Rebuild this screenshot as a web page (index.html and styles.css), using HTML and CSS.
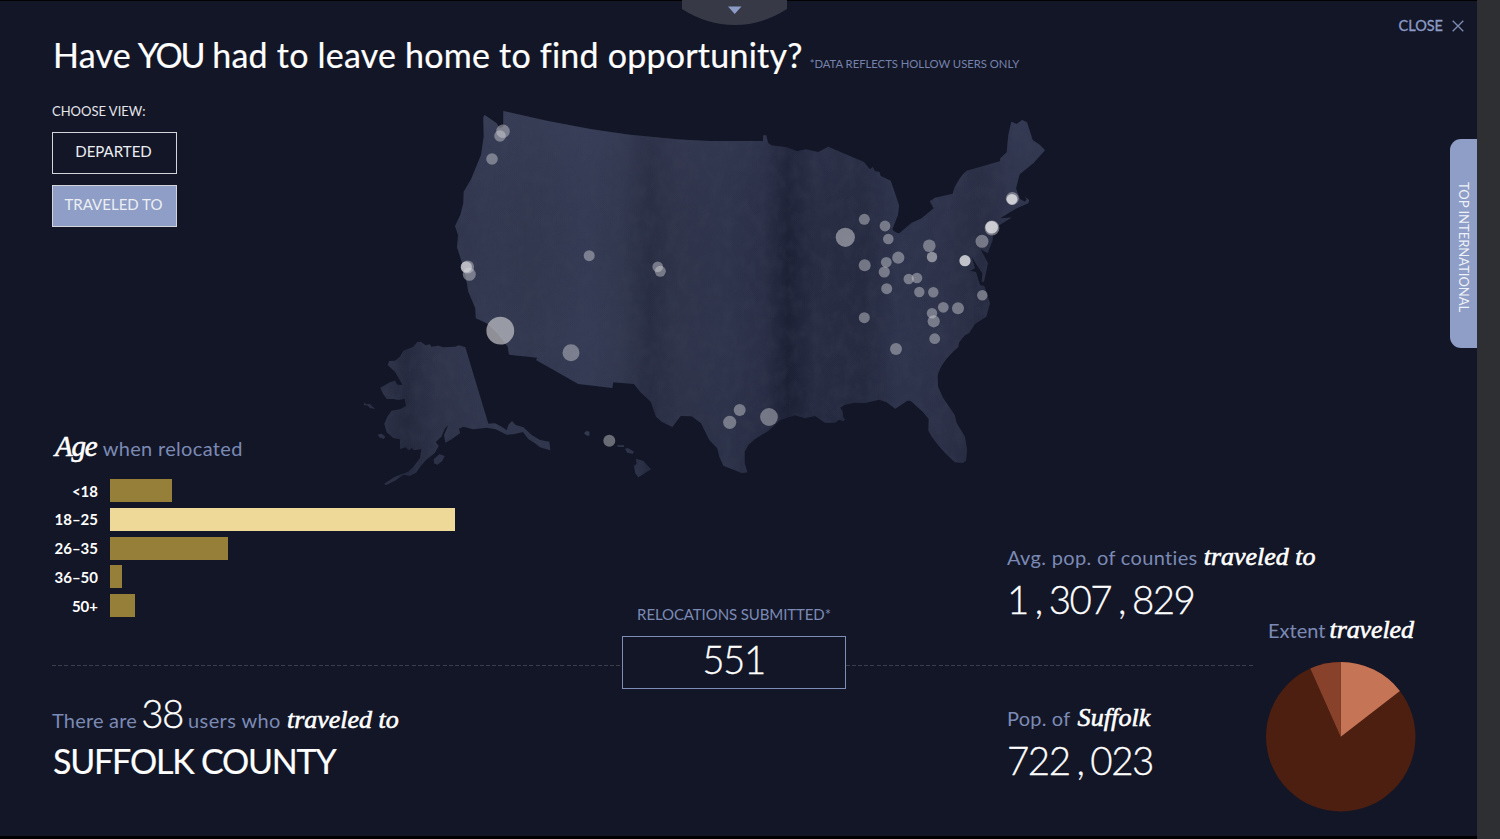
FILE: index.html
```html
<!DOCTYPE html>
<html lang="en">
<head>
<meta charset="utf-8">
<title>Have YOU had to leave home to find opportunity?</title>
<link rel="stylesheet" href="styles.css">
</head>
<body>
<div class="panel">
  <svg class="notch" viewBox="0 0 105 26" width="105" height="26">
    <path d="M0 0H105V9Q80 25 52.500 25Q25 25 0 9Z" fill="#373946"/>
    <path d="M46 6.500H59.500L52.700 14Z" fill="#8c9cc6"/>
  </svg>

  <header class="header">
    <h1 class="title">Have <span class="you">YOU</span> had to leave home to find opportunity?</h1>
    <span class="title-note">*DATA REFLECTS HOLLOW USERS ONLY</span>
    <button class="close">CLOSE
      <svg viewBox="0 0 12 12" width="12" height="12"><path d="M.7.700 11.300 11.300M11.300.700.700 11.300" stroke="#7f8db4" stroke-width="1.300"/></svg>
    </button>
  </header>

  <main class="main">
    <svg class="map" viewBox="360 100 690 395" width="690" height="395">
      <defs>
        <linearGradient id="folds" gradientUnits="userSpaceOnUse" x1="360" x2="1050" y1="0" y2="0">
          <stop offset="0" stop-color="#2d3248"/>
          <stop offset=".04" stop-color="#2d3248"/>
          <stop offset=".067" stop-color="#262b40"/>
          <stop offset=".11" stop-color="#30354c"/>
          <stop offset=".18" stop-color="#343a52"/>
          <stop offset=".25" stop-color="#333950"/>
          <stop offset=".33" stop-color="#363c56"/>
          <stop offset=".38" stop-color="#333950"/>
          <stop offset=".42" stop-color="#292e44"/>
          <stop offset=".46" stop-color="#30354c"/>
          <stop offset=".53" stop-color="#2f354d"/>
          <stop offset=".585" stop-color="#2b3048"/>
          <stop offset=".62" stop-color="#1d2136"/>
          <stop offset=".66" stop-color="#282d44"/>
          <stop offset=".73" stop-color="#262b41"/>
          <stop offset=".78" stop-color="#2f354e"/>
          <stop offset=".85" stop-color="#2e334b"/>
          <stop offset=".9" stop-color="#282d43"/>
          <stop offset=".95" stop-color="#30354e"/>
          <stop offset="1" stop-color="#30364e"/>
        </linearGradient>
        <linearGradient id="sheen" x1="0" x2="0" y1="0" y2="1">
          <stop offset="0" stop-color="#4a5070" stop-opacity=".2"/>
          <stop offset=".6" stop-color="#131626" stop-opacity="0"/>
          <stop offset="1" stop-color="#131626" stop-opacity=".15"/>
        </linearGradient>
        <filter id="grain" x="0" y="0" width="100%" height="100%">
          <feTurbulence type="fractalNoise" baseFrequency=".09 .07" numOctaves="3" seed="4"/>
          <feColorMatrix values="0 0 0 0 .05  0 0 0 0 .06  0 0 0 0 .1  1.200 0 0 0 -.42"/>
        </filter>
        <clipPath id="land">
          <path d="M503.300 111 546.700 120.700 591.700 129.300 630 134.700 680 139.500 710 141H763L763.300 135.300H766.300L768 142.700 771.300 145.300 786.700 147.300 797.300 151.300 805.700 149.300 818.300 152 828.300 146.700 864 162 870 169.300 872.700 167 875 171 879.300 172 880.700 176 890.700 180.700 895 193.300 899 205.300 898 215 892.300 229.300 Q895 233 899.300 233.300L911.700 222.700 921.700 218.300 933.700 208.300 929.700 201.300 935 197.700 952.700 193.700 954.300 188Q960 176 966.700 170.700L1000 161.300 1000.300 158.300 1006.700 152.300 1008.300 135 1011.300 121.700 1016.700 124 1022 120 1027 122.300 1032.700 140 1040 145 1045 150.300 1033.300 163.300 1019.700 174.300 1016 188.300 1020 199 1025 201.700 1026.700 199.300 1025 196.700 1029.300 200 1028.300 203.300 1016.700 208.300 1000 218.300 1011.700 217.500 998.300 225.700 993 228 992.700 240 987.700 253.300 980.700 249.300 988 263.300 984 281.700H981.700L982.300 273.300 976.700 265 971.700 256.700 975 268.300 970 270.700 976 272 980 285 984.300 286 990 303.300 986.300 316.700 975 324 969 333.300 964.300 335.700 959 342.700 958.300 347Q940 363 937.700 376L938 386.700 943.300 398.300 954.700 415 956.700 423.300 965 436.700 967 450 966 460.700 962.700 463 955 462.300 946 454Q933 440 928.300 430.700L928.700 419 922.700 411.700 910.700 401 907.300 400.700 895.300 408.700 886.700 402.300 879 399.700 865 403 855 402.700 845 404.700 840.300 407.700 842.700 411.700 843 416.700 845 419.300 843.300 421.300 839.300 419.700 835 422.700H825L815 416 805 418.300 795 415.300 780 420 768.300 431 755 439 748.300 445 744.700 451.700V463.300L747.300 472.300 741.700 473 723.300 465.700 719.300 456.700 717.300 448.300 709.300 440 701 423.300 691.700 416.300 680.700 416 672.300 427 661.700 421.700 656 416.700 650.700 401.700 640 391.700 634 384 613.300 382.300 612.300 388 578.300 384 536 360 537.300 357.700 509 354.700 507.700 346.700 497 333 486.700 323.300 475.700 318.300 475.300 308.300 468.300 291.700 466 278.300 461.700 261.700 457 247.300 458 235 455 226 460.300 215 463.300 203.300 463.700 191.700 471 179.300 481 155 483.700 136.700 483.300 117.300 484.700 115 496.700 123.300 499.300 128 503.300 126.700Z"/>
          <path transform="translate(340 320) scale(.33333)" d="M376 82 445 311 465 310 485 320 500 331 505 315 516 303 527 315 550 322 575 345 600 360 628 365 631 391 600 382 585 370 565 357 549 336 520 343 500 344 468 328 440 323 400 328 370 320 357 326 360 340 335 358 316 368 312 345 325 315 315 325 304 350 287 366 296 378 285 398 258 420 240 441 228 458 210 467 190 464 165 482 138 495 133 491 165 470 205 455 222 438 240 415 244 387 222 391 215 383 208 391 196 382 180 387 180 358 160 354 140 337 133 312 142 290 155 272 180 268 198 258 194 236 178 240 160 237 140 237 128 220 121 203 150 187 165 182 172 194 188 195 165 155 143 135 148 123 165 122 180 110 190 92 220 80 232 66 242 65 257 76 270 73 274 80 295 77 310 82 345 80 357 76Z"/>
          <path transform="translate(340 320) scale(.33333)" d="M72 247 78 253 90 252 105 267 90 264 82 256 72 256ZM113 344 125 341 136 350 131 357 118 352ZM281 418 298 403 314 408 306 424 292 434 282 430ZM732 339 740 333 748 335 748 347 738 346ZM831 376 852 376 852 381 833 380ZM855 386 865 385 882 395 878 401 862 398ZM888 416 910 423 933 448 895 472 886 460 882 437 890 432Z"/>
        </clipPath>
      </defs>
      <g clip-path="url(#land)">
        <rect x="360" y="100" width="690" height="395" fill="url(#folds)"/>
        <rect x="360" y="100" width="690" height="395" fill="url(#sheen)"/>
        <rect x="360" y="100" width="690" height="395" filter="url(#grain)" opacity=".4"/>
      </g>
      <g fill="#d2d2d6" fill-opacity=".45">
        <circle cx="503" cy="131.300" r="6.800"/><circle cx="500" cy="136" r="5.800"/><circle cx="492" cy="159" r="5.800"/>
        <circle cx="467.500" cy="267" r="6.600"/><circle cx="469.300" cy="274.300" r="6.500"/>
        <circle cx="589.200" cy="255.700" r="5.500"/><circle cx="657.700" cy="266.700" r="5.300"/><circle cx="660.300" cy="271.300" r="5.500"/>
        <circle cx="571" cy="352.700" r="8.500"/><circle cx="845.300" cy="237.300" r="9.600" fill-opacity=".53"/>
        <circle cx="864.300" cy="219.300" r="5.500"/><circle cx="864.700" cy="265.300" r="6"/><circle cx="864.300" cy="317.700" r="5.500"/>
        <circle cx="739.700" cy="410" r="6"/><circle cx="729.700" cy="422.300" r="6.600"/><circle cx="769" cy="417" r="8.900"/>
        <circle cx="885" cy="226" r="5.400"/><circle cx="888.300" cy="239" r="5.300"/><circle cx="898.300" cy="257.700" r="6.100"/>
        <circle cx="886.300" cy="262.300" r="5.400"/><circle cx="884.300" cy="272" r="5.600"/><circle cx="886.700" cy="288.700" r="5.500"/>
        <circle cx="908.700" cy="279" r="5.200"/><circle cx="917" cy="278" r="5.300"/><circle cx="919.300" cy="292" r="5.200"/>
        <circle cx="933.300" cy="292.300" r="5.200"/><circle cx="929.300" cy="245.700" r="6.300"/><circle cx="932" cy="257" r="5.200" fill-opacity=".58"/>
        <circle cx="943.300" cy="307.300" r="5.400"/><circle cx="958" cy="308.300" r="6"/><circle cx="932" cy="313.300" r="5.200"/>
        <circle cx="933.700" cy="321.300" r="6.100"/><circle cx="934.700" cy="338.700" r="5.400"/><circle cx="896" cy="349" r="6"/>
        <circle cx="982" cy="241.300" r="6.500"/><circle cx="982.300" cy="295.300" r="5.200"/><circle cx="609.300" cy="440.700" r="6"/>
        <circle cx="992" cy="228" r="7.400"/><circle cx="1012.300" cy="198.500" r="6.500"/>
      </g>
      <circle cx="500.300" cy="330.700" r="13.900" fill="#c9c9cd" fill-opacity=".68"/>
      <g fill="#dcdce0" fill-opacity=".85">
        <circle cx="466.300" cy="267" r="5.600" fill-opacity=".65"/><circle cx="965" cy="260.700" r="5.600"/>
        <circle cx="991.700" cy="227.300" r="6.300"/><circle cx="1012" cy="199.300" r="5.400"/>
      </g>
    </svg>

    <aside class="side-tab">TOP INTERNATIONAL</aside>
    <div class="divider"></div>

    <section class="left">
      <p class="choose">CHOOSE VIEW:</p>
      <button class="view">DEPARTED</button>
      <button class="view view-active">TRAVELED TO</button>

      <h2 class="label age-title"><em class="script script-age">Age</em> <span class="age-rest">when relocated</span></h2>
      <div class="bars">
        <span class="range">&lt;18</span><i class="bar" style="width:62.500px"></i>
        <span class="range">18–25</span><i class="bar bar-active" style="width:345px"></i>
        <span class="range">26–35</span><i class="bar" style="width:118px"></i>
        <span class="range">36–50</span><i class="bar" style="width:12.500px"></i>
        <span class="range">50+</span><i class="bar" style="width:25.500px"></i>
      </div>

      <p class="label users"><span class="there">There are</span> <b class="number count">38</b> <span class="who">users who</span> <em class="script">traveled to</em></p>
      <p class="county">SUFFOLK COUNTY</p>
    </section>

    <section class="center">
      <p class="submitted">RELOCATIONS SUBMITTED*</p>
      <div class="total number">551</div>
    </section>

    <section class="right">
      <p class="label"><span class="avg">Avg. pop. of counties</span> <em class="script">traveled to</em></p>
      <p class="number figure">1<i>,</i>307<i>,</i>829</p>
      <p class="label pop"><span class="pop-of">Pop. of</span> <em class="script script-suffolk">Suffolk</em></p>
      <p class="number figure">722<i>,</i>023</p>
    </section>

    <section class="extent">
      <p class="label extent-title"><span class="ext">Extent</span> <em class="script script-extent">traveled</em></p>
      <svg viewBox="-75 -75 150 150" width="149.500" height="149.500">
        <circle r="75" fill="#4c1f10"/>
        <path d="M0 0V-75A75 75 0 0 1 59.300-46Z" fill="#c67456"/>
        <path d="M0 0-30.500-68.500A75 75 0 0 1 0-75Z" fill="#88422b"/>
      </svg>
    </section>
  </main>
</div>
</body>
</html>
```

FILE: styles.css
```css
* { box-sizing: border-box; margin: 0; padding: 0; }

body {
  width: 1500px;
  height: 839px;
  overflow: hidden;
  background: #2e2f33;
  color: #fff;
  font-family: Lato, "Open Sans", sans-serif;
}

button { font: inherit; color: inherit; background: none; border: 0; }

.panel {
  position: relative;
  width: 1477px;
  height: 839px;
  background: #131626;
  border-top: 1px solid #000;
  border-bottom: 3px solid #000;
}

.notch { position: absolute; top: -1px; left: 682px; }

.header {
  display: flex;
  align-items: baseline;
  height: 99px;
  padding: 33px 13px 0 53px;
}

.title {
  font-size: 34px;
  line-height: 42px;
  font-weight: 400;
  letter-spacing: .220px;
  white-space: nowrap;
  -webkit-text-stroke: .2px #fff;
}

.you { letter-spacing: -2.200px; margin-left: -2px; }

.title-note {
  margin: 0 0 1px 7px;
  padding-bottom: 1px;
  font-size: 11.300px;
  letter-spacing: -.02px;
  color: #7583ac;
  white-space: nowrap;
}

.close {
  display: flex;
  align-items: center;
  align-self: flex-start;
  gap: 9px;
  margin: -18px 0 0 auto;
  font-size: 14.500px;
  line-height: 20px;
  color: #8c9cc6;
  -webkit-text-stroke: .3px #8c9cc6;
}

.main {
  display: grid;
  grid-template-columns: 52px 570px 224px 161px 259px 150px 1fr;
  grid-template-rows: 735px;
}

.main > * { grid-row: 1; }

.map { grid-column: 1 / -1; margin-left: 360px; }

.side-tab {
  grid-column: 7;
  justify-self: end;
  width: 27px;
  height: 209px;
  margin-top: 39px;
  padding-top: 8px;
  border-radius: 11px 0 0 11px;
  background: #8e9ec6;
  color: #eef1f9;
  font-size: 13px;
  line-height: 27px;
  text-align: center;
  writing-mode: vertical-rl;
}

.divider {
  grid-column: 2 / 6;
  width: 1203px;
  height: 1px;
  margin-top: 565px;
  background: repeating-linear-gradient(90deg, #3a3d4a 0 4px, transparent 4px 6.200px);
}

.left { grid-column: 2; }

.choose { font-size: 13px; line-height: 22px; color: #e4e5ea; }

.view {
  display: block;
  width: 125px;
  height: 42px;
  margin-top: 10px;
  padding: 0 2px 4px 0;
  border: 1px solid #d4d5da;
  color: #eceef3;
  font-size: 15px;
}

.view-active { margin-top: 11px; background: #8e9ec6; }

.label {
  font-size: 20px;
  line-height: 30px;
  font-weight: 400;
  color: #7b8ab5;
  white-space: nowrap;
}

.script {
  margin-left: 1px;
  color: #fff;
  font-family: "Liberation Serif", serif;
  font-size: 26px;
  font-style: italic;
  font-weight: 400;
  line-height: 20px;
  -webkit-text-stroke: .6px #fff;
}

.script-age { margin: 0 1px 0 1px; font-size: 29px; letter-spacing: -1.200px; }
.script-suffolk { margin-left: 2px; letter-spacing: .1px; }
.age-rest, .avg { letter-spacing: .330px; }
.there { letter-spacing: .2px; }
.who { letter-spacing: .4px; }
.pop-of { letter-spacing: .2px; }
.script-extent { margin-left: -1px; letter-spacing: -.100px; }

.age-title { margin: 206px 0 0 2px; }

.bars {
  display: grid;
  grid-template-columns: 46px auto;
  grid-auto-rows: 23px;
  gap: 5.800px 11.800px;
  align-items: center;
  justify-items: start;
  margin-top: 16px;
}

.range { justify-self: end; font-size: 15px; font-weight: 700; line-height: 23px; padding-top: 1px; }
.bar { height: 23px; background: #968039; }
.bar-active { background: #efd998; }

.number {
  color: #fff;
  font-weight: 300;
  font-size: 38.500px;
  letter-spacing: -1.500px;
  -webkit-text-stroke: .3px #fff;
}

.users { height: 40px; line-height: 40px; margin-top: 83px; }
.count { line-height: 20px; margin-left: -1px; }

.county {
  padding-left: 1px;
  font-size: 34px;
  line-height: 42px;
  letter-spacing: -1.200px;
  white-space: nowrap;
  -webkit-text-stroke: .2px #fff;
}

.center { grid-column: 3; margin-top: 503px; text-align: center; }
.submitted { font-size: 15px; line-height: 22px; letter-spacing: -.100px; color: #7b8ab5; white-space: nowrap; }

.total {
  height: 53px;
  margin-top: 11px;
  padding-right: 1px;
  border: 1px solid #7e8db5;
  background: #131626;
  line-height: 45px;
}

.right { grid-column: 5; margin-top: 442px; }
.figure { height: 46px; line-height: 46px; margin-top: 4px; white-space: nowrap; }
.figure i { display: inline-block; width: 20.800px; text-align: center; font-style: normal; }
.pop { margin-top: 81px; }

.extent { grid-column: 6; margin-top: 515px; }
.extent-title { margin: 0 0 17px 2px; }
.extent svg { display: block; }
```
